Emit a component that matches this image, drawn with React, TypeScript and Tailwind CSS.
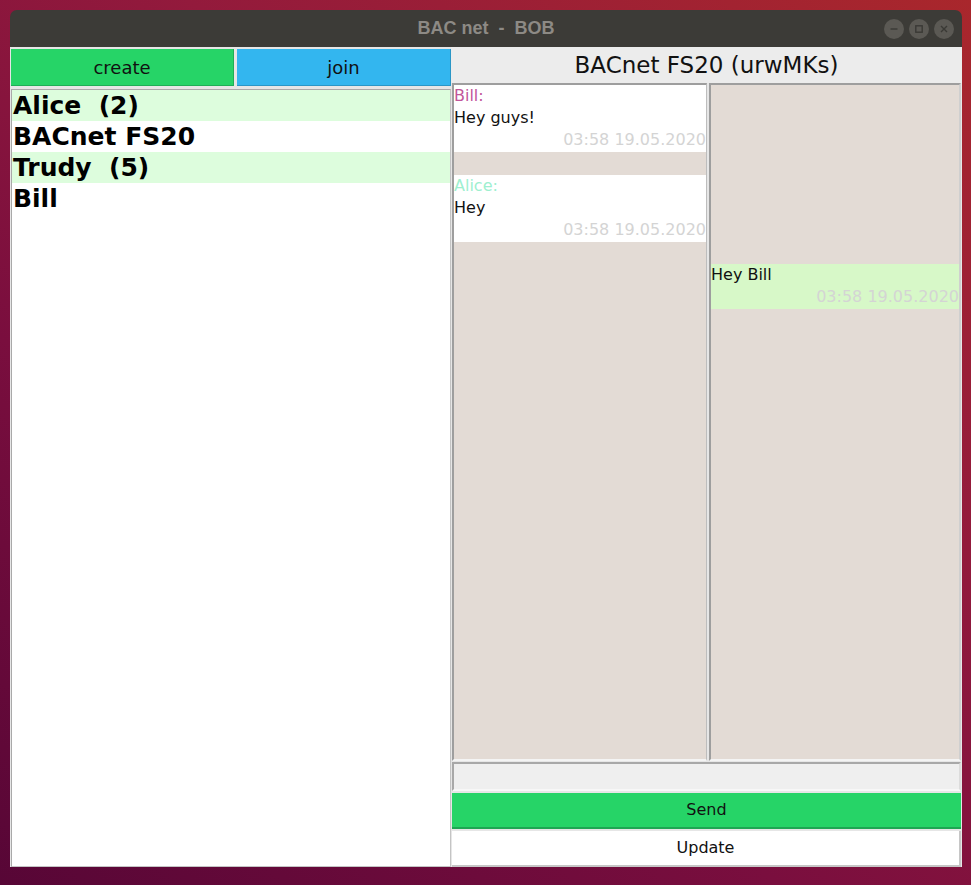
const contacts = [
  { name: 'Alice  (2)', unread: true },
  { name: 'BACnet FS20', unread: false },
  { name: 'Trudy  (5)', unread: true },
  { name: 'Bill', unread: false },
];

function TitleButton({ kind }: { kind: 'min' | 'max' | 'close' }) {
  return (
    <div className="w-[20px] h-[20px] rounded-full bg-[#5b5954] flex items-center justify-center">
      <svg width="10" height="10" viewBox="0 0 10 10" fill="none" stroke="#3a3935" strokeWidth="1.4">
        {kind === 'min' && <path d="M1.5 5h7" />}
        {kind === 'max' && <rect x="1.8" y="1.8" width="6.4" height="6.4" />}
        {kind === 'close' && <path d="M2 2l6 6M8 2l-6 6" />}
      </svg>
    </div>
  );
}

export default function App() {
  return (
    <div className="w-[971px] h-[885px] overflow-hidden bg-[linear-gradient(215deg,#a9272c_0%,#931a3c_35%,#7a0e3e_65%,#570636_100%)] pt-[10px] pl-[10px] font-['DejaVu_Sans',sans-serif]">
      <div className="w-[952px] flex flex-col">
        {/* Title bar */}
        <div className="h-[37px] rounded-t-[7px] bg-[#3c3b37] flex items-center relative">
          <div className="flex-1 text-center text-[18px] font-bold text-[#8d8a85] whitespace-pre font-['Liberation_Sans',sans-serif]">
            BAC net  -  BOB
          </div>
          <div className="absolute right-[8px] top-[9px] flex gap-[5px]">
            <TitleButton kind="min" />
            <TitleButton kind="max" />
            <TitleButton kind="close" />
          </div>
        </div>

        {/* Body */}
        <div className="h-[820px] bg-[#e6e6e6] flex">
          {/* Left panel */}
          <div className="w-[441px] flex flex-col pl-[1px] pt-[2px]">
            <div className="flex gap-[3px] h-[37px]">
              <div className="w-[223px] bg-[#26d467] border-r border-b border-[#1fae56] flex items-center justify-center text-[18px] text-[#111]">
                create
              </div>
              <div className="flex-1 bg-[#33b6ef] border-r border-b border-[#2a96c6] flex items-center justify-center text-[18px] text-[#111]">
                join
              </div>
            </div>
            <div className="flex-1 mt-[3px] bg-white border border-[#c4c4c4] border-t-[#a9a9a9] border-l-[#a9a9a9]">
              {contacts.map((c) => (
                <div
                  key={c.name}
                  className={`h-[31px] pl-[1px] flex items-center text-[25px] font-bold text-black whitespace-pre ${c.unread ? 'bg-[#ddfddd]' : 'bg-white'}`}
                >
                  {c.name}
                </div>
              ))}
            </div>
          </div>

          {/* Right panel */}
          <div className="w-[511px] flex flex-col">
            <div className="h-[36px] bg-[#ececec] flex items-center justify-center text-[23px] text-[#111]">
              BACnet FS20 (urwMKs)
            </div>
            <div className="flex-1 flex gap-[2px] pl-[1px] pr-[1px]">
              {/* incoming */}
              <div className="w-[255px] bg-[#e3dbd5] border-2 border-r border-t-[#9e9e9e] border-l-[#9e9e9e] border-b-[#f4f4f4] border-r-[#bdbdbd] text-[16px]">
                <div className="bg-white h-[67px] leading-[22px]">
                  <div className="text-[#c2559a]">Bill:</div>
                  <div className="text-[#111]">Hey guys!</div>
                  <div className="text-right text-[#d4d4d4]">03:58 19.05.2020</div>
                </div>
                <div className="bg-white h-[67px] leading-[22px] mt-[23px]">
                  <div className="text-[#9eefcf]">Alice:</div>
                  <div className="text-[#111]">Hey</div>
                  <div className="text-right text-[#d4d4d4]">03:58 19.05.2020</div>
                </div>
              </div>
              {/* outgoing */}
              <div className="flex-1 bg-[#e3dbd5] border-2 border-t-[#9e9e9e] border-l-[#9e9e9e] border-b-[#f4f4f4] border-r-[#cfcfcf] text-[16px]">
                <div className="bg-[#d7f8c8] h-[45px] leading-[22px] mt-[179px]">
                  <div className="text-[#111]">Hey Bill</div>
                  <div className="text-right text-[#d4d4d4] whitespace-nowrap overflow-hidden">03:58 19.05.2020</div>
                </div>
              </div>
            </div>
            <div className="h-[29px] mt-[1px] ml-[1px] mr-[1px] bg-[#efefef] border-2 border-t-[#a8a8a8] border-l-[#a8a8a8] border-b-[#f7f7f7] border-r-[#dcdcdc]" />
            <div className="h-[36px] mt-[2px] ml-[1px] mr-[1px] bg-[#26d467] border-b-2 border-[#1ea653] flex items-center justify-center text-[16px] text-[#111]">
              Send
            </div>
            <div className="h-[36px] mt-[2px] ml-[1px] mr-[1px] bg-white border-r-2 border-b-2 border-[#c6c6c6] flex items-center justify-center text-[16px] text-[#111]">
              Update
            </div>
          </div>
        </div>
      </div>
    </div>
  );
}
